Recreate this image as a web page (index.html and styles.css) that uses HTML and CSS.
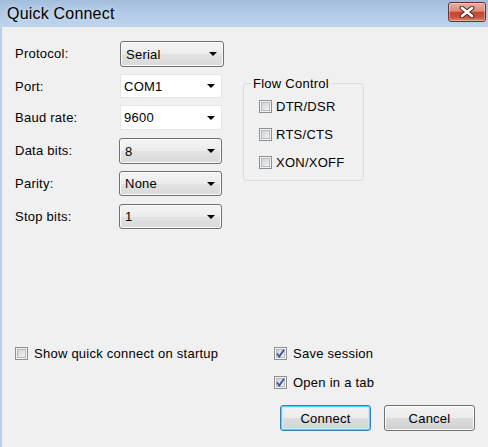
FILE: index.html
```html
<!DOCTYPE html>
<html>
<head>
<meta charset="utf-8">
<link rel="stylesheet" href="styles.css">
</head>
<body>
<div class="window">
  <div class="titlebar">
    <span class="title">Quick Connect</span>
    <div class="close">
      <svg width="16" height="12" viewBox="0 0 16 12">
        <path d="M3 2 L13 10 M13 2 L3 10" stroke="#4a2a2a" stroke-width="4.6" stroke-linecap="round"/>
        <path d="M3 2 L13 10 M13 2 L3 10" stroke="#ffffff" stroke-width="2.6" stroke-linecap="round"/>
      </svg>
    </div>
  </div>
  <div class="content">
    <div class="top">
      <div class="form">
        <div class="row h33"><span class="lbl">Protocol:</span><div class="combo bcombo w104 h26"><span>Serial</span><i class="arrow"></i></div></div>
        <div class="row h31"><span class="lbl">Port:</span><div class="combo wcombo w102 h24"><span>COM1</span><i class="arrow"></i></div></div>
        <div class="row h33"><span class="lbl">Baud rate:</span><div class="combo wcombo w102 h25"><span>9600</span><i class="arrow"></i></div></div>
        <div class="row h33"><span class="lbl">Data bits:</span><div class="combo bcombo w103 h26 shift"><span>8</span><i class="arrow"></i></div></div>
        <div class="row h33"><span class="lbl">Parity:</span><div class="combo bcombo w103 h25 shift"><span>None</span><i class="arrow"></i></div></div>
        <div class="row h25"><span class="lbl">Stop bits:</span><div class="combo bcombo w103 h25 shift"><span>1</span><i class="arrow"></i></div></div>
      </div>
      <fieldset class="flow">
        <legend>Flow Control</legend>
        <div class="checks">
          <label class="check"><span class="box"></span>DTR/DSR</label>
          <label class="check"><span class="box"></span>RTS/CTS</label>
          <label class="check"><span class="box"></span>XON/XOFF</label>
        </div>
      </fieldset>
    </div>
    <div class="bottom">
      <div class="left-opts">
        <label class="check wide"><span class="box"></span>Show quick connect on startup</label>
      </div>
      <div class="right-opts">
        <label class="check wide"><span class="box checked"><svg width="11" height="11" viewBox="0 0 11 11"><path d="M2 5.5 L4.3 8.5 L9 1.8" fill="none" stroke="#3d4f99" stroke-width="1.8"/></svg></span>Save session</label>
        <label class="check wide"><span class="box checked"><svg width="11" height="11" viewBox="0 0 11 11"><path d="M2 5.5 L4.3 8.5 L9 1.8" fill="none" stroke="#3d4f99" stroke-width="1.8"/></svg></span>Open in a tab</label>
      </div>
    </div>
    <div class="buttons">
      <div class="btn default">Connect</div>
      <div class="btn cancel">Cancel</div>
    </div>
  </div>
</div>
</body>
</html>
```

FILE: styles.css
```css
html, body {
  margin: 0;
  padding: 0;
}
body {
  font-family: "Liberation Sans", Arial, sans-serif;
  font-size: 13px;
  letter-spacing: 0.25px;
  color: #000;
}
.window {
  width: 488px;
  height: 447px;
  display: flex;
  flex-direction: column;
  background: #b7cfe9;
  overflow: hidden;
}
.titlebar {
  height: 27px;
  flex: none;
  display: flex;
  align-items: center;
  background: linear-gradient(#a3bedd, #b4cce7 60%, #bcd3ec);
  padding-left: 7px;
  box-sizing: border-box;
}
.title {
  font-size: 16px;
  letter-spacing: 0.2px;
  color: #000;
  text-shadow: 0 0 6px rgba(255,255,255,0.8);
}
.close {
  margin-left: auto;
  margin-right: 2px;
  margin-top: -3px;
  width: 38px;
  height: 20px;
  box-sizing: border-box;
  border: 1px solid #6a2e2e;
  border-radius: 3px;
  background: linear-gradient(#ebae9f 0%, #dc8b78 45%, #c6452f 52%, #c8563f 80%, #da8c70 100%);
  box-shadow: inset 0 0 0 1px rgba(255,255,255,0.35);
  display: flex;
  align-items: center;
  justify-content: center;
}
.content {
  flex: 1;
  margin-left: 2px;
  background: #f0f0f0;
  display: flex;
  flex-direction: column;
}
.top {
  display: flex;
  align-items: flex-start;
}
.form {
  padding-left: 13px;
  padding-top: 14px;
  display: flex;
  flex-direction: column;
}
.row {
  display: flex;
  align-items: flex-start;
}
.h33 { height: 33px; }
.h31 { height: 31px; }
.h25 { height: 25px; }
.lbl {
  width: 105px;
  flex: none;
  line-height: 26px;
}
.combo {
  box-sizing: border-box;
  display: flex;
  align-items: center;
  justify-content: space-between;
  padding: 0 6px 0 5px;
}
.combo .arrow {
  width: 0;
  height: 0;
  border-left: 4px solid transparent;
  border-right: 4px solid transparent;
  border-top: 4px solid #000;
}
.bcombo {
  border: 1px solid #707070;
  border-radius: 3px;
  background: linear-gradient(#f4f4f4 0%, #ececec 50%, #e2e2e2 51%, #d9d9d9 100%);
  box-shadow: inset 0 0 0 1px #fbfbfb;
}
.wcombo {
  background: #fff;
  border: 1px solid #e2e5e9;
  padding-left: 3px;
}
.w104 { width: 104px; }
.w103 { width: 103px; }
.w102 { width: 102px; }
.h26 { height: 26px; }
.h25 { height: 25px; }
.h24 { height: 24px; }
.shift { margin-left: -1px; }

.flow {
  margin: 49px 0 0 19px;
  width: 121px;
  box-sizing: border-box;
  border: 1px solid #d5dfe5;
  border-radius: 3px;
  padding: 0 6px 10px 7px;
}
.flow legend {
  padding: 0 2px;
  line-height: 15px;
}
.checks {
  display: flex;
  flex-direction: column;
  gap: 13px;
  padding-left: 8px;
  padding-top: 8px;
}
.check {
  display: flex;
  align-items: center;
  gap: 4px;
  line-height: 15px;
}
.check.wide {
  gap: 6px;
}
.box {
  width: 13px;
  height: 13px;
  box-sizing: border-box;
  border: 1px solid #8e8f8f;
  background: linear-gradient(135deg, #c4c8ce, #eef0f2 75%, #f6f6f6);
  box-shadow: inset 0 0 0 1px #f4f4f4, inset 0 0 0 2px #b5b9bf;
  display: flex;
  align-items: center;
  justify-content: center;
  flex: none;
}
.box.checked svg {
  display: block;
}

.bottom {
  margin-top: auto;
  display: flex;
  align-items: flex-start;
}
.left-opts {
  padding-left: 13px;
  width: 272px;
  box-sizing: border-box;
}
.right-opts {
  display: flex;
  flex-direction: column;
  gap: 14px;
}
.buttons {
  display: flex;
  justify-content: flex-end;
  gap: 13px;
  padding-right: 13px;
  margin-top: 15px;
  padding-bottom: 16px;
}
.btn {
  height: 26px;
  box-sizing: border-box;
  border-radius: 3px;
  display: flex;
  align-items: center;
  justify-content: center;
}
.default {
  width: 91px;
  border: 1px solid #3c7fb1;
  background: linear-gradient(#f3f3f3 0%, #ececec 50%, #dedede 51%, #d2d2d2 100%);
  box-shadow: inset 0 0 0 1px #48d8fb, inset 0 0 0 2px #c7eefc;
}
.cancel {
  width: 91px;
  border: 1px solid #707070;
  background: linear-gradient(#f3f3f3 0%, #ebebeb 50%, #dddddd 51%, #cfcfcf 100%);
  box-shadow: inset 0 0 0 1px #fcfcfc;
}
```
